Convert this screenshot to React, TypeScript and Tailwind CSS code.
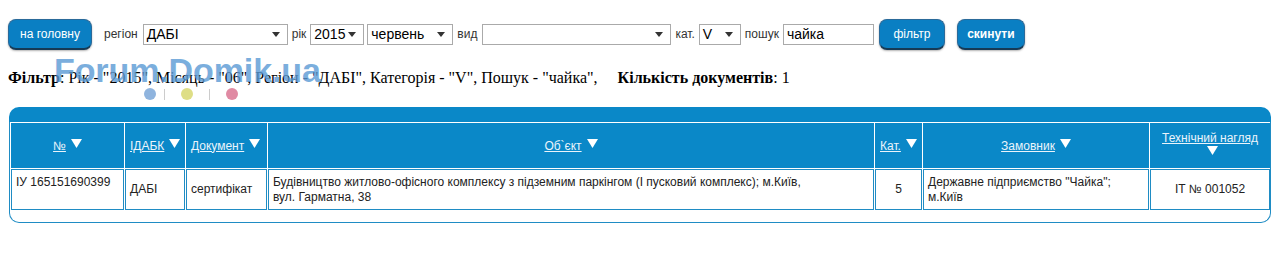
import React from "react";

const Caret = () => (
  <svg width="8" height="5" viewBox="0 0 8 5" className="shrink-0">
    <path d="M0 0 L8 0 L4 5 Z" fill="#333" />
  </svg>
);

const Sel = ({ w, v }: { w: string; v: string }) => (
  <div className={`${w} h-[21px] border border-[#aaa] bg-white flex items-center justify-between pl-[3px] pr-[7px] text-[14px] text-black`}>
    <span>{v}</span>
    <Caret />
  </div>
);

const Btn = ({ children, w, bold }: { children: React.ReactNode; w: string; bold?: boolean }) => (
  <div
    className={`${w} h-[31px] rounded-[8px] bg-[#0a7fc3] border border-[#2a6a9a] border-b-[2px] border-b-[#163a56] shadow-[0_1px_2px_rgba(0,0,0,0.3)] text-white text-[12px] flex items-center justify-center ${bold ? "font-bold" : ""}`}
  >
    {children}
  </div>
);

const Arrow = () => (
  <svg width="11" height="9" viewBox="0 0 11 9" className="inline-block ml-[5px] align-[2px]">
    <path d="M0 0 L11 0 L5.5 9 Z" fill="#fff" />
  </svg>
);

export default function App() {
  const th = "bg-[#0a88c8] border border-[#0a88c8] text-[12px] font-normal text-[#eaf4fb] align-middle";
  const td = "border border-[#1f8cc4] bg-white text-[12px] text-[#222] px-[4px] align-middle leading-[15px]";
  return (
    <div className="w-[1280px] h-[278px] bg-white relative" style={{ fontFamily: '"Liberation Sans", Arial, sans-serif' }}>
      <div className="flex items-center pt-[18px] pl-[8px] h-[50px] text-[12px] text-[#333]">
        <Btn w="w-[84px]">на головну</Btn>
        <span className="ml-[12px] mr-[5px]">регіон</span>
        <Sel w="w-[145px]" v="ДАБІ" />
        <span className="ml-[4px] mr-[4px]">рік</span>
        <Sel w="w-[54px]" v="2015" />
        <div className="w-[3px]" />
        <Sel w="w-[86px]" v="червень" />
        <span className="ml-[4px] mr-[5px]">вид</span>
        <Sel w="w-[189px]" v="" />
        <span className="ml-[4px] mr-[4px]">кат.</span>
        <Sel w="w-[42px]" v="V" />
        <span className="ml-[4px] mr-[4px]">пошук</span>
        <div className="w-[91px] h-[21px] border border-[#aaa] bg-white text-[14px] text-black pl-[3px] flex items-center">чайка</div>
        <div className="w-[5px]" />
        <Btn w="w-[66px]">фільтр</Btn>
        <div className="w-[12px]" />
        <Btn w="w-[68px]" bold>скинути</Btn>
      </div>

      <div
        className="mt-[18px] pl-[8px] text-[16px] text-black leading-[20px] whitespace-nowrap"
        style={{ fontFamily: '"Liberation Serif", "Times New Roman", serif' }}
      >
        <b>Фільтр</b>: Рік - "2015", Місяць - "06", Регіон - "ДАБІ", Категорія - "V", Пошук - "чайка",
        <span className="inline-block w-[20px]" />
        <b>Кількість документів</b>: 1
      </div>

      {/* watermark */}
      <div className="absolute left-[54px] top-[51px] pointer-events-none">
        <div className="text-[34px] font-bold text-[#5b9bd5] opacity-80 leading-[38px] tracking-[-0.1px]">Forum.Domik.ua</div>
        <div className="flex items-center ml-[90px] mt-[-1px] gap-[8px]">
          <div className="w-[12px] h-[12px] rounded-full bg-[#8fb4de]" />
          <div className="w-px h-[11px] bg-[#ccc]" />
          <div className="w-[12px] h-[12px] rounded-full bg-[#dede86] ml-[8px]" />
          <div className="w-px h-[11px] bg-[#ccc] ml-[8px]" />
          <div className="w-[12px] h-[12px] rounded-full bg-[#e08aa3] ml-[8px]" />
        </div>
      </div>

      <div className="mt-[19px] mx-[9px] w-[1262px]">
        <div className="h-[15px] bg-[#0a88c8] rounded-t-[10px]" />
        <div className="border-x border-[#1f8cc4] bg-white">
          <table className="w-full table-fixed border-separate border-spacing-[1px]">
            <colgroup>
              <col style={{ width: 113 }} />
              <col style={{ width: 60 }} />
              <col style={{ width: 81 }} />
              <col style={{ width: 606 }} />
              <col style={{ width: 47 }} />
              <col style={{ width: 226 }} />
              <col style={{ width: 120 }} />
            </colgroup>
            <thead>
              <tr className="h-[45px]">
                <th className={th}><span className="underline">№</span><Arrow /></th>
                <th className={`${th} text-left pl-[4px]`}><span className="underline">ІДАБК</span><Arrow /></th>
                <th className={`${th} text-left pl-[4px]`}><span className="underline">Документ</span><Arrow /></th>
                <th className={th}><span className="underline">Об`єкт</span><Arrow /></th>
                <th className={`${th} text-left pl-[4px]`}><span className="underline">Кат.</span><Arrow /></th>
                <th className={th}><span className="underline">Замовник</span><Arrow /></th>
                <th className={`${th} leading-[15px]`}>
                  <span className="underline">Технічний нагляд</span>
                  <br />
                  <Arrow />
                </th>
              </tr>
            </thead>
            <tbody>
              <tr className="h-[41px]">
                <td className={`${td} align-top pt-[5px]`}>ІУ 165151690399</td>
                <td className={td}>ДАБІ</td>
                <td className={td}>сертифікат</td>
                <td className={td}>
                  Будівництво житлово-офісного комплексу з підземним паркінгом (І пусковий комплекс); м.Київ,
                  <br />
                  вул. Гарматна, 38
                </td>
                <td className={`${td} text-center`}>5</td>
                <td className={td}>
                  Державне підприємство "Чайка";
                  <br />
                  м.Київ
                </td>
                <td className={`${td} text-center`}>ІТ № 001052</td>
              </tr>
            </tbody>
          </table>
        </div>
        <div className="h-[12px] border border-t-0 border-[#1f8cc4] rounded-b-[10px] bg-white" />
      </div>
    </div>
  );
}
